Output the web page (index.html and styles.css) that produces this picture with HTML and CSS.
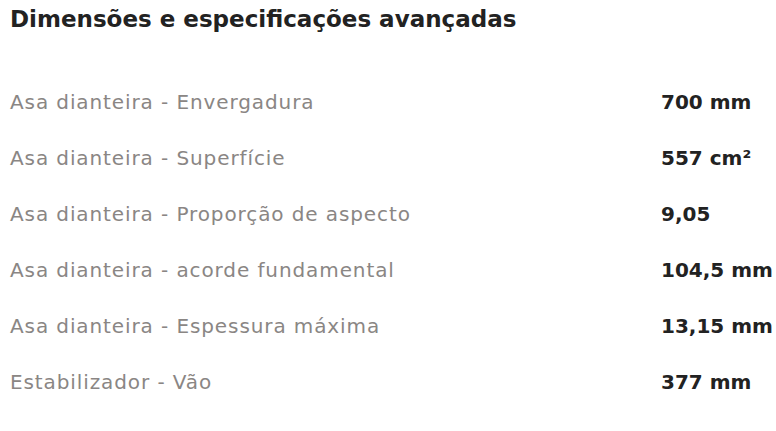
FILE: index.html
```html
<!DOCTYPE html>
<html lang="pt">
<head>
<meta charset="utf-8">
<link rel="stylesheet" href="styles.css">
</head>
<body>
<section class="specs">
  <h2 class="title">Dimensões e especificações avançadas</h2>
  <div class="table">
    <div class="row"><span class="label">Asa dianteira - Envergadura</span><span class="value">700 mm</span></div>
    <div class="row"><span class="label">Asa dianteira - Superfície</span><span class="value">557 cm²</span></div>
    <div class="row"><span class="label">Asa dianteira - Proporção de aspecto</span><span class="value">9,05</span></div>
    <div class="row"><span class="label">Asa dianteira - acorde fundamental</span><span class="value">104,5 mm</span></div>
    <div class="row"><span class="label">Asa dianteira - Espessura máxima</span><span class="value">13,15 mm</span></div>
    <div class="row"><span class="label">Estabilizador - Vão</span><span class="value">377 mm</span></div>
  </div>
</section>
</body>
</html>
```
FILE: styles.css
```css
html, body {
  margin: 0;
  padding: 0;
  background: #ffffff;
}
.specs {
  padding: 5px 0 0 10px;
  font-family: "DejaVu Sans", sans-serif;
}
.title {
  margin: 0;
  font-size: 23px;
  line-height: 28px;
  font-weight: bold;
  color: #222222;
}
.table {
  margin-top: 55px;
  display: flex;
  flex-direction: column;
}
.row {
  display: grid;
  grid-template-columns: 651px auto;
  height: 56px;
  align-items: start;
}
.label {
  font-size: 20px;
  line-height: 28px;
  letter-spacing: 0.9px;
  color: #8a8684;
  white-space: nowrap;
}
.value {
  font-size: 20px;
  line-height: 28px;
  font-weight: bold;
  color: #222222;
  white-space: nowrap;
}
```
